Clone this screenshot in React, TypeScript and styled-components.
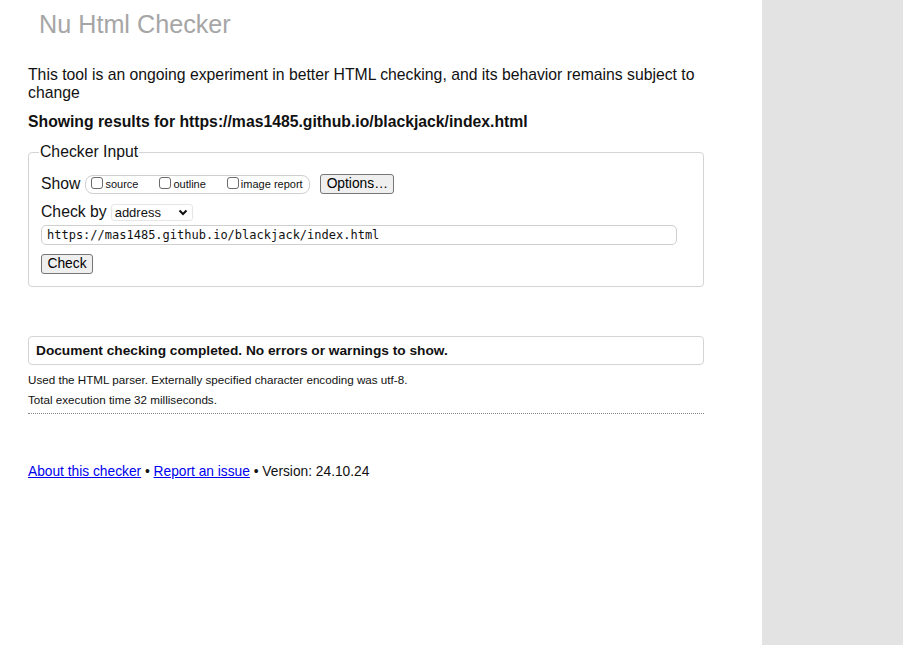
import React from "react";
import styled, { createGlobalStyle } from "styled-components";

const Global = createGlobalStyle`
  html, body { margin: 0; padding: 0; background: #fff; }
  body { font-family: "Liberation Sans", Arial, sans-serif; color: #111; }
`;

const Layout = styled.div`
  display: flex;
  min-height: 645px;
`;

const Main = styled.main`
  width: 762px;
  padding: 0 58px 0 28px;
  box-sizing: border-box;
  background: #fff;
`;

const Aside = styled.aside`
  flex: 1;
  background: #e3e3e3;
`;

const Title = styled.h1`
  margin: 10px 0 0 11px;
  font-size: 25.2px;
  font-weight: normal;
  color: #a6a6a6;
  line-height: 29px;
`;

const Intro = styled.p`
  margin: 27px 0 0;
  font-size: 15.75px;
  line-height: 18px;
`;

const Heading = styled.h2`
  margin: 11px 0 0;
  font-size: 15.75px;
  font-weight: bold;
  line-height: 18px;
`;

const Fieldset = styled.fieldset`
  margin: 12px 0 0;
  padding: 4px 12px 12px;
  border: 1px solid #d4d4d4;
  border-radius: 4px;
`;

const Legend = styled.legend`
  font-size: 15.75px;
  padding: 0 1px;
  margin-left: -2px;
`;

const Row = styled.div<{ $mt?: number }>`
  display: flex;
  align-items: center;
  font-size: 15.75px;
  margin-top: ${(p) => p.$mt ?? 0}px;
`;

const Group = styled.span`
  display: inline-flex;
  align-items: center;
  margin-left: 5px;
  height: 19px;
  padding: 0 6px 0 5px;
  border: 1px solid #cfcfcf;
  border-radius: 8px;
  box-sizing: border-box;
`;

const Option = styled.label<{ $gap?: number }>`
  display: inline-flex;
  align-items: center;
  font-size: 11px;
  margin-right: ${(p) => p.$gap ?? 0}px;
`;

const Box = styled.input`
  appearance: none;
  width: 12px;
  height: 12px;
  margin: 0 2px 2px 0;
  border: 1px solid #6b6b6b;
  border-radius: 3px;
  background: #fff;
  box-sizing: border-box;
`;

const Button = styled.button`
  font-family: "Liberation Sans", Arial, sans-serif;
  font-size: 13.8px;
  height: 20px;
  padding: 0 6px;
  background: #efefef;
  border: 1px solid #767676;
  border-radius: 3px;
  color: #000;
  line-height: 16px;
`;

const OptionsButton = styled(Button)`
  margin-left: 10px;
  width: 74px;
`;

const SelectBox = styled.span`
  display: inline-flex;
  align-items: center;
  justify-content: space-between;
  margin-left: 4px;
  width: 82px;
  height: 17px;
  padding: 0 4px 0 3px;
  border: 1px solid #e6e6e6;
  border-radius: 3px;
  box-sizing: border-box;
  font-size: 13px;
`;

const UrlInput = styled.div`
  margin-top: 4px;
  width: 636px;
  height: 20px;
  box-sizing: border-box;
  border: 1px solid #cfcfcf;
  border-radius: 5px;
  padding: 0 5px;
  display: flex;
  align-items: center;
  font-family: "DejaVu Sans Mono", "Liberation Mono", monospace;
  font-size: 12px;
`;

const CheckButton = styled(Button)`
  margin-top: 9px;
  width: 52px;
  padding: 0;
`;

const Result = styled.div`
  margin-top: 49px;
  border: 1px solid #d4d4d4;
  border-radius: 4px;
  height: 29px;
  box-sizing: border-box;
  padding: 0 7px;
  display: flex;
  align-items: center;
  font-size: 13.7px;
  font-weight: bold;
`;

const Note = styled.p<{ $mt: number }>`
  margin: ${(p) => p.$mt}px 0 0;
  font-size: 11.65px;
  line-height: 14px;
`;

const Rule = styled.hr`
  margin: 6px 0 0;
  border: 0;
  border-top: 1px dotted #888;
`;

const Footer = styled.p`
  margin: 50px 0 0;
  font-size: 13.75px;
`;

const Link = styled.a`
  color: #0000ee;
  text-decoration: underline;
`;

export default function App() {
  return (
    <>
      <Global />
      <Layout>
        <Main>
          <Title>Nu Html Checker</Title>
          <Intro>
            This tool is an ongoing experiment in better HTML checking, and its
            behavior remains subject to change
          </Intro>
          <Heading>Showing results for https://mas1485.github.io/blackjack/index.html</Heading>
          <Fieldset>
            <Legend>Checker Input</Legend>
            <Row $mt={9}>
              Show
              <Group>
                <Option $gap={21}>
                  <Box type="checkbox" />
                  source
                </Option>
                <Option $gap={21}>
                  <Box type="checkbox" />
                  outline
                </Option>
                <Option>
                  <Box type="checkbox" />
                  image report
                </Option>
              </Group>
              <OptionsButton>Options…</OptionsButton>
            </Row>
            <Row $mt={9}>
              Check by
              <SelectBox>
                address
                <svg width="10" height="7" viewBox="0 0 10 7">
                  <path d="M1.5 1.5 L5 5 L8.5 1.5" fill="none" stroke="#111" strokeWidth="2" />
                </svg>
              </SelectBox>
            </Row>
            <UrlInput>https://mas1485.github.io/blackjack/index.html</UrlInput>
            <CheckButton>Check</CheckButton>
          </Fieldset>
          <Result>Document checking completed. No errors or warnings to show.</Result>
          <Note $mt={8}>Used the HTML parser. Externally specified character encoding was utf-8.</Note>
          <Note $mt={6}>Total execution time 32 milliseconds.</Note>
          <Rule />
          <Footer>
            <Link href="#">About this checker</Link> • <Link href="#">Report an issue</Link> • Version: 24.10.24
          </Footer>
        </Main>
        <Aside />
      </Layout>
    </>
  );
}
